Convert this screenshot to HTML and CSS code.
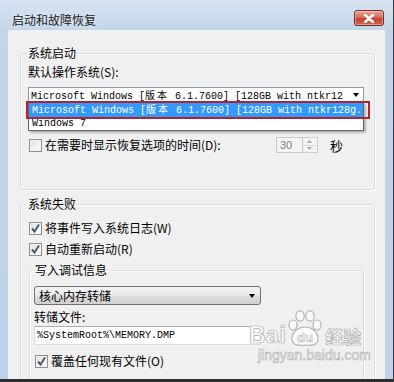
FILE: index.html
```html
<!DOCTYPE html>
<html lang="zh-CN">
<head>
<meta charset="utf-8">
<title>启动和故障恢复</title>
<link rel="stylesheet" href="styles.css">
</head>
<body>
<div class="window">
  <div class="titlebar">
    <span class="title">启动和故障恢复</span>
    <span class="close">
      <svg width="14" height="9" viewBox="0 0 14 9"><path d="M3 1 L11 8 M11 1 L3 8" stroke="#fff" stroke-width="2.4" stroke-linecap="round"/></svg>
    </span>
  </div>
  <div class="client">
    <fieldset class="group g1">
      <legend>系统启动</legend>
      <div class="lbl">默认操作系统(S):</div>
      <div class="combo-wrap">
        <div class="combo1">
          <span class="mono">Microsoft Windows [<span class="cjk">版本</span> 6.1.7600] [128GB with ntkr12</span>
          <span class="arrow"></span>
        </div>
        <div class="droplist">
          <div class="item sel mono">Microsoft Windows [<span class="cjk">版本</span> 6.1.7600] [128GB with ntkr128g.</div>
          <div class="item mono">Windows 7</div>
        </div>
        <div class="mark"></div>
      </div>
      <div class="row timeout">
        <span class="cb"></span>
        <span class="text grow">在需要时显示恢复选项的时间(D):</span>
        <span class="spin">
          <span class="spin-val">30</span>
          <span class="spin-btns">
            <span class="sb up"><svg width="5" height="3" viewBox="0 0 5 3"><path d="M0 3 L2.5 0 L5 3Z" fill="#a8a8a8"/></svg></span>
            <span class="sb down"><svg width="5" height="3" viewBox="0 0 5 3"><path d="M0 0 L2.5 3 L5 0Z" fill="#a8a8a8"/></svg></span>
          </span>
        </span>
        <span class="sec">秒</span>
      </div>
    </fieldset>

    <fieldset class="group g2">
      <legend>系统失败</legend>
      <div class="row first">
        <span class="cb checked"><svg width="11" height="11" viewBox="0 0 11 11"><path d="M2 5.5 L4.5 8.5 L9 1.5" stroke="#4e5a6e" stroke-width="2" fill="none"/></svg></span>
        <span class="text">将事件写入系统日志(W)</span>
      </div>
      <div class="row">
        <span class="cb checked"><svg width="11" height="11" viewBox="0 0 11 11"><path d="M2 5.5 L4.5 8.5 L9 1.5" stroke="#4e5a6e" stroke-width="2" fill="none"/></svg></span>
        <span class="text">自动重新启动(R)</span>
      </div>
      <fieldset class="sub">
        <legend>写入调试信息</legend>
        <div class="combo2">
          <span>核心内存转储</span>
          <span class="arrow"></span>
        </div>
        <div class="lbl small-gap">转储文件:</div>
        <div class="input mono">%SystemRoot%\MEMORY.DMP</div>
        <div class="row cb3">
          <span class="cb checked"><svg width="11" height="11" viewBox="0 0 11 11"><path d="M2 5.5 L4.5 8.5 L9 1.5" stroke="#4e5a6e" stroke-width="2" fill="none"/></svg></span>
          <span class="text">覆盖任何现有文件(O)</span>
        </div>
      </fieldset>
    </fieldset>

    <div class="watermark">
      <div class="wm-top">
        <span class="wm-bai">Bai</span>
        <svg class="wm-paw" width="36" height="38" viewBox="0 0 36 38">
          <g fill="#fbfbfb" stroke="#b4b4b4" stroke-width="1.2">
            <ellipse cx="6" cy="16" rx="4" ry="5"/>
            <ellipse cx="13" cy="7" rx="4.2" ry="5.2"/>
            <ellipse cx="23" cy="7" rx="4.2" ry="5.2"/>
            <ellipse cx="30" cy="16" rx="4" ry="5"/>
            <path d="M5 30 C5 22 12 18 18 18 C24 18 31 22 31 30 C31 36 25 37 18 36 C11 37 5 36 5 30Z"/>
          </g>
          <text x="18" y="33" text-anchor="middle" font-family="Liberation Sans, sans-serif" font-size="13" font-weight="bold" fill="#fbfbfb" stroke="#b4b4b4" stroke-width="0.6">du</text>
        </svg>
        <span class="wm-jy">经验</span>
      </div>
      <div class="wm-url">jingyan.baidu.com</div>
    </div>
  </div>
</div>
</body>
</html>
```

FILE: styles.css
```css
* { box-sizing: border-box; }

body {
  margin: 0;
  width: 394px;
  height: 382px;
  overflow: hidden;
  font-family: "Noto Sans CJK SC", "Liberation Sans", sans-serif;
  font-size: 12px;
  color: #000;
}

.window {
  width: 394px;
  height: 382px;
  display: flex;
  flex-direction: column;
  background: linear-gradient(to bottom, #d7e3f1 0, #c3d5ea 30px, #bdd1e8 100%);
  border-right: 1px solid #3c3c3c;
  border-bottom: 3px solid #2e2e2e;
}

.titlebar {
  height: 30px;
  flex: none;
  display: flex;
  align-items: flex-start;
  justify-content: space-between;
  padding: 0 9px 0 12px;
}

.title {
  margin-top: 12px;
  line-height: 16px;
  color: #1b1b1b;
  text-shadow: 0 0 6px rgba(255,255,255,0.8);
}

.close {
  margin-top: 10px;
  width: 30px;
  height: 16px;
  display: flex;
  align-items: center;
  justify-content: center;
  border: 1px solid #7a2b22;
  border-radius: 3px;
  background: linear-gradient(to bottom, #e9a597 0, #d66e5c 45%, #c2402c 55%, #d2654d 100%);
  box-shadow: inset 0 0 0 1px rgba(255,255,255,0.35);
}

.client {
  flex: 1;
  margin: 0 8px;
  background: #f0f0f0;
  position: relative;
  overflow: hidden;
}

fieldset {
  margin: 0;
  min-width: 0;
}

legend {
  padding: 0 1px;
  margin-left: -1px;
  line-height: 16px;
}

.group {
  margin: 15px 10px 0 12px;
  border: 1px solid #d5dfe5;
  border-radius: 3px;
  padding: 3px 10px 36px 7px;
  box-shadow: 1px 1px 0 #fff, inset 1px 1px 0 #fff;
}

.g2 {
  margin-top: 6px;
  padding-bottom: 20px;
}

.lbl {
  line-height: 16px;
}

.small-gap { margin-top: 4px; }

.mono {
  font-family: "Liberation Mono", "Noto Sans CJK SC", monospace;
  font-size: 10px;
}

.cjk { letter-spacing: 2px; }

.combo-wrap {
  position: relative;
  margin-top: 7px;
}

.combo1 {
  height: 15px;
  border: 1px solid #8b9aae;
  background: #fff;
  display: flex;
  align-items: center;
  justify-content: space-between;
  padding: 0 4px 0 2px;
  white-space: nowrap;
  overflow: hidden;
}

.arrow {
  width: 0;
  height: 0;
  border-left: 3.5px solid transparent;
  border-right: 3.5px solid transparent;
  border-top: 4px solid #000;
  flex: none;
}

.droplist {
  position: absolute;
  top: 100%;
  left: 0;
  right: 0;
  height: 29px;
  background: #fff;
  border: 1px solid #646464;
  box-shadow: 2px 2px 2px rgba(0,0,0,0.25);
  z-index: 2;
}

.item {
  white-space: nowrap;
  overflow: hidden;
  padding-left: 3px;
  height: 12px;
  line-height: 12px;
}

.item.sel {
  height: 15px;
  line-height: 15px;
  background: #3399ff;
  color: #fff;
}

.mark {
  position: absolute;
  top: 14px;
  left: -2px;
  width: 344px;
  height: 18px;
  border: 2px solid #b3232d;
  z-index: 3;
}

.row {
  display: flex;
  align-items: center;
  height: 16px;
  margin-top: 5px;
}

.timeout { margin-top: 35px; }

.cb {
  flex: none;
  width: 13px;
  height: 13px;
  margin-left: 1px;
  border: 1px solid #8f8f8f;
  background: linear-gradient(135deg, #dcdcdc 0, #f4f4f4 60%, #fff 100%);
  box-shadow: inset 0 0 0 1px #f4f4f4;
  display: flex;
  align-items: center;
  justify-content: center;
}

.text {
  margin-left: 3px;
  line-height: 16px;
  white-space: nowrap;
}

.grow { flex: 1; }

.spin {
  flex: none;
  width: 42px;
  height: 16px;
  display: flex;
}

.spin-val {
  flex: 1;
  border: 1px solid #c9c9c9;
  background: #f4f4f4;
  color: #7d7d7d;
  font-family: "Liberation Sans", sans-serif;
  font-size: 11px;
  line-height: 14px;
  padding-left: 3px;
}

.spin-btns {
  width: 15px;
  display: flex;
  flex-direction: column;
  border: 1px solid #cfcfcf;
  border-left: none;
}

.sb {
  flex: 1;
  display: flex;
  align-items: center;
  justify-content: center;
  background: #f3f3f3;
}

.sb.up { border-bottom: 1px solid #dcdcdc; }

.sec {
  margin-left: 12px;
  margin-right: 21px;
  font-size: 13px;
}

.sub {
  margin: 5px 0 0 1px;
  border: 1px solid #d5dfe5;
  border-radius: 3px;
  padding: 8px 6px 10px 4px;
  box-shadow: 1px 1px 0 #fff, inset 1px 1px 0 #fff;
}

.sub legend { margin-left: 0; }

.sub > .combo2 { margin-top: 0; }

.combo2 {
  width: 227px;
  height: 19px;
  border: 1px solid #707070;
  border-radius: 3px;
  background: linear-gradient(to bottom, #f3f3f3 0, #ebebeb 48%, #dddddd 52%, #d0d0d0 100%);
  display: flex;
  align-items: center;
  justify-content: space-between;
  padding: 0 5px 0 4px;
  line-height: 16px;
}

.input {
  margin-top: 1px;
  width: 227px;
  height: 19px;
  border: 1px solid #d7dde4;
  border-top-color: #abadb3;
  background: #fff;
  line-height: 17px;
  padding-left: 2px;
  white-space: nowrap;
}

.cb3 { margin-top: 8px; }

.watermark {
  position: absolute;
  left: 241px;
  top: 279px;
  z-index: 4;
  color: #fbfbfb;
}

.wm-top {
  display: flex;
  align-items: flex-end;
  height: 38px;
}

.wm-bai {
  font-family: "Liberation Sans", sans-serif;
  font-weight: bold;
  font-size: 23px;
  line-height: 22px;
  letter-spacing: 0.5px;
  -webkit-text-stroke: 0.7px #adadad;
  margin-bottom: 1px;
}

.wm-paw { margin-left: 1px; }

.wm-jy {
  font-weight: bold;
  font-size: 18px;
  line-height: 22px;
  -webkit-text-stroke: 0.7px #adadad;
  margin-left: 2px;
}

.wm-url {
  margin-left: 9px;
  font-family: "Liberation Sans", sans-serif;
  font-size: 14px;
  line-height: 16px;
  -webkit-text-stroke: 0.6px #b0b0b0;
}
```
